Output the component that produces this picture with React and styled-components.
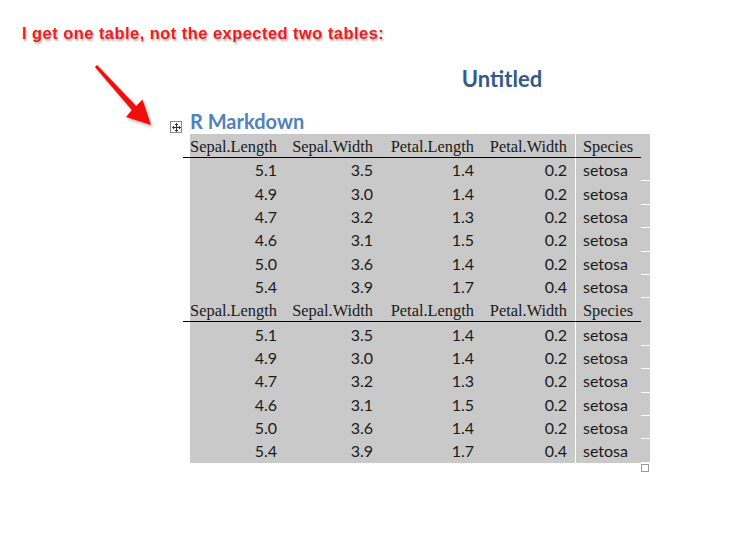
import React from 'react';
import styled, { createGlobalStyle } from 'styled-components';

const Global = createGlobalStyle`
  html, body { margin: 0; padding: 0; background: #fff; }
  body { font-family: "Liberation Sans", Arial, sans-serif; }
`;

const Page = styled.div`
  position: relative;
  width: 739px;
  height: 537px;
  overflow: hidden;
  background: #fff;
`;

const Annotation = styled.p`
  margin: 0;
  padding: 23px 0 0 22px;
  font: bold 16.5px/20px "Liberation Sans", Arial, sans-serif;
  letter-spacing: 0.45px;
  color: #ee1c24;
  text-shadow: 1px 2px 2px rgba(0, 0, 0, 0.3);
`;

const ArrowLayer = styled.svg`
  position: absolute;
  left: 0;
  top: 0;
  width: 200px;
  height: 140px;
  pointer-events: none;
  overflow: visible;
`;

const Doc = styled.div`
  padding-left: 190px;
`;

const Title = styled.h1`
  margin: 22px 0 0;
  width: 624px;
  text-align: center;
  font: bold 22px/28px Lato, "Liberation Sans", sans-serif;
  color: #345a8a;
`;

const Heading = styled.h2`
  margin: 16px 0 0;
  font: bold 20px/24px Lato, "Liberation Sans", sans-serif;
  color: #4f81bd;
`;

const TableWrap = styled.div`
  position: relative;
  margin: 1px 0 0 -7px;
  width: 467px;
`;

const Row = styled.div`
  display: grid;
  grid-template-columns: 7px 92px 96px 101px 96px 1px 65px 9px;
  height: ${(p) => (p.$head ? '24px' : '23.4px')};
`;

const Spacer = styled.div`
  background: #fff;
  box-shadow: ${(p) => (p.$head ? 'inset 0 -1px 0 #000' : 'none')};
`;

const Cell = styled.div`
  display: flex;
  align-items: center;
  justify-content: ${(p) => (p.$left ? 'flex-start' : 'flex-end')};
  padding: ${(p) => (p.$head ? '2px' : '0')} ${(p) => p.$pr || 5}px 0 ${(p) => p.$pl || 0}px;
  background: #c9c9c9;
  color: #1a1a1a;
  white-space: nowrap;
  font-family: ${(p) =>
    p.$head ? '"Liberation Serif", "Times New Roman", serif' : 'Lato, "Liberation Sans", sans-serif'};
  font-size: ${(p) => (p.$head ? '16.4px' : '16px')};
  box-shadow: ${(p) => (p.$head ? 'inset 0 -1px 0 #000' : 'none')};
`;

const Divider = styled.div`
  background: #fff;
  box-shadow: ${(p) => (p.$head ? 'inset 0 -1px 0 #000' : 'none')};
`;

const Strip = styled.div`
  background: #c9c9c9;
  box-shadow: ${(p) => (p.$head ? 'none' : 'inset 0 -1px 0 #fff')};
`;

const MoveHandle = styled.div`
  position: absolute;
  left: -13px;
  top: -13px;
  width: 10px;
  height: 10px;
  border: 1px solid #8a8a8a;
  background: #fff;
  display: flex;
  align-items: center;
  justify-content: center;
`;

const ResizeHandle = styled.div`
  position: absolute;
  left: 458px;
  bottom: -9px;
  width: 6px;
  height: 6px;
  border: 1px solid #9a9a9a;
  background: #fff;
`;

const headers = ['Sepal.Length', 'Sepal.Width', 'Petal.Length', 'Petal.Width'];
const data = [
  ['5.1', '3.5', '1.4', '0.2'],
  ['4.9', '3.0', '1.4', '0.2'],
  ['4.7', '3.2', '1.3', '0.2'],
  ['4.6', '3.1', '1.5', '0.2'],
  ['5.0', '3.6', '1.4', '0.2'],
  ['5.4', '3.9', '1.7', '0.4'],
];
const pads = [5, 5, 5, 8];

function HeaderRow() {
  return (
    <Row $head>
      <Spacer $head />
      {headers.map((h, i) => (
        <Cell key={h} $head $pr={pads[i]}>
          {h}
        </Cell>
      ))}
      <Divider $head />
      <Cell $head $left $pl={7}>
        Species
      </Cell>
      <Strip $head />
    </Row>
  );
}

function DataRow({ values }) {
  return (
    <Row>
      <Spacer />
      {values.map((v, i) => (
        <Cell key={i} $pr={pads[i]}>
          {v}
        </Cell>
      ))}
      <Divider />
      <Cell $left $pl={7}>
        setosa
      </Cell>
      <Strip />
    </Row>
  );
}

export default function App() {
  return (
    <>
      <Global />
      <Page>
        <Annotation>I get one table, not the expected two tables:</Annotation>
        <Doc>
          <Title>Untitled</Title>
          <Heading>R Markdown</Heading>
          <TableWrap>
            <MoveHandle>
              <svg width="9" height="9" viewBox="0 0 9 9" fill="none" stroke="#333" strokeWidth="1">
                <path d="M4.5 0.5v8M0.5 4.5h8" />
                <path d="M3 2 4.5 0.5 6 2M3 7 4.5 8.5 6 7M2 3 0.5 4.5 2 6M7 3 8.5 4.5 7 6" />
              </svg>
            </MoveHandle>
            {[0, 1].map((g) => (
              <React.Fragment key={g}>
                <HeaderRow />
                {data.map((r, i) => (
                  <DataRow key={i} values={r} />
                ))}
              </React.Fragment>
            ))}
            <ResizeHandle />
          </TableWrap>
        </Doc>
        <ArrowLayer viewBox="0 0 200 140">
          <defs>
            <filter id="sh" x="-20%" y="-20%" width="150%" height="150%">
              <feDropShadow dx="1.5" dy="2" stdDeviation="1.5" floodColor="#000" floodOpacity="0.3" />
            </filter>
          </defs>
          <polygon
            points="97.1,65 136.2,106 142.5,99.5 151,125 126,117 131.8,110 94.9,67"
            fill="#f20d0d"
            strokeLinejoin="round"
            filter="url(#sh)"
          />
        </ArrowLayer>
      </Page>
    </>
  );
}
